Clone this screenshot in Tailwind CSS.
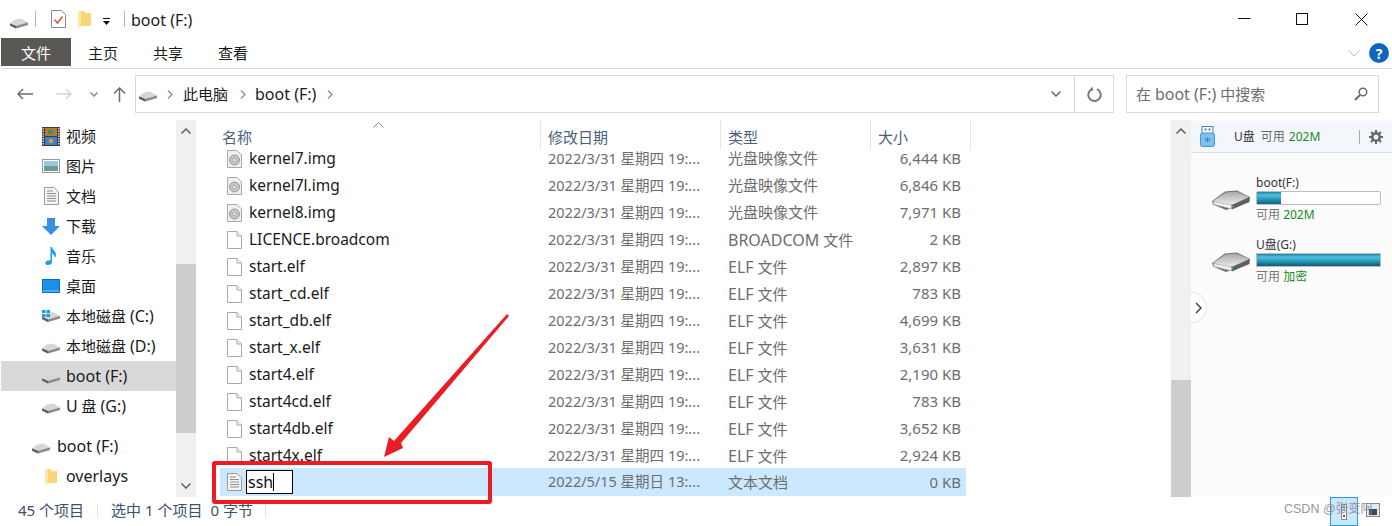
<!DOCTYPE html>
<html lang="zh-CN">
<head>
  <meta charset="UTF-8">
  <title>boot (F:)</title>
  <script src="https://cdn.jsdelivr.net/npm/@tailwindcss/browser@4"></script>
</head>
<body class="bg-white">
  <svg width="0" height="0" class="absolute">
    <defs>
      <symbol id="drive" viewBox="0 0 18 12">
        <path d="M0 6.5 5 2.5 11 1.5 18 5.5 18 8 6 11 0 8.500Z" fill="#d6d6d6"/>
        <path d="M0 6.500 6 9 18 5.500 18 8 6 11.500 0 8.500Z" fill="#8a8a8a"/>
        <path d="M6 9 6 11.500 0 8.500 0 6.500Z" fill="#5e5e5e"/>
        <rect x="6.500" y="9.300" width="1.500" height="1.500" fill="#38b24a"/>
      </symbol>
      <symbol id="folder" viewBox="0 0 13 18">
        <path d="M0 1h6l1 2h6v13H3l-3 1.500Z" fill="#f7d673"/>
        <path d="M0 1h3v16.500H0Z" fill="#fbe9b0"/>
      </symbol>
      <symbol id="file" viewBox="0 0 15 18">
        <path d="M.5.500h9.500l4.500 4.500v12.500H.5Z" fill="#fff" stroke="#a9a9a9"/>
        <path d="M10 .5v4.500h4.500" fill="#f0f0f0" stroke="#a9a9a9"/>
      </symbol>
      <symbol id="disc" viewBox="0 0 15 18">
        <path d="M.5.500h9.500l4.500 4.500v12.500H.5Z" fill="#f0f0f0" stroke="#a9a9a9"/>
        <circle cx="7.500" cy="10" r="5" fill="#c4c4c4" stroke="#9a9a9a"/>
        <circle cx="7.500" cy="10" r="1.500" fill="#fff" stroke="#8a8a8a" stroke-width=".6"/>
      </symbol>
      <symbol id="textfile" viewBox="0 0 15 18">
        <path d="M.5.500h9.500l4.500 4.500v12.500H.5Z" fill="#f4f4f4" stroke="#9a9a9a"/>
        <path d="M3 4h6M3 6.500h9M3 9h9M3 11.500h9M3 14h9" stroke="#8c8c8c"/>
      </symbol>
      <linearGradient id="topface" x1="0" y1="0" x2="0" y2="1">
        <stop offset="0" stop-color="#a8a8a8"/><stop offset="1" stop-color="#ececec"/>
      </linearGradient>
      <symbol id="bigdrive" viewBox="0 0 38 20">
        <path d="M0 11 13 1.500 25 .5 38 7 37.500 12 14 20 1 14.500Z" fill="#6f6f6f"/>
        <path d="M1 11 13.500 2.500 24.500 1.500 37 7 21 14.500 14 15Z" fill="url(#topface)"/>
        <path d="M1 11.500 20 15 20 19 2 14.500Z" fill="#f1f1f1" stroke="#9a9a9a" stroke-width=".5"/>
        <path d="M20 15 37 8 37 12 20 19.500Z" fill="#5e5e5e"/>
        <rect x="19.500" y="15" width="2" height="4" fill="#3da035"/>
      </symbol>
    </defs>
  </svg>

  <div class="relative w-[1392px] h-[526px] overflow-hidden flex flex-col bg-white text-[#1a1a1a] text-[15px] font-['Noto_Sans','Noto_Sans_CJK_SC',sans-serif]">

    <!-- title bar -->
    <div class="h-[38px] flex items-center shrink-0">
      <svg class="w-[18px] h-[12px] ml-[10px] mt-[8px]"><use href="#drive"/></svg>
      <div class="w-px h-[16px] bg-[#b5b5b5] ml-[7px]"></div>
      <svg class="w-[15px] h-[18px] ml-[15px]" viewBox="0 0 15 18">
        <path d="M.5.500h10l4 4v13H.5Z" fill="#fff" stroke="#8a8a8a"/>
        <path d="M3.500 9.500 6.500 13 11.500 6.500" fill="none" stroke="#e8532b" stroke-width="1.500"/>
      </svg>
      <svg class="w-[13px] h-[18px] ml-[12px]"><use href="#folder"/></svg>
      <svg class="w-[7px] h-[7px] ml-[12px] mt-[4px]" viewBox="0 0 7 7"><path d="M0 0h7v1H0ZM0 3h7L3.500 7Z" fill="#111"/></svg>
      <div class="w-px h-[16px] bg-[#b5b5b5] ml-[14px]"></div>
      <span class="ml-[6px] pt-[2px] text-[16px]">boot (F:)</span>
      <div class="ml-auto flex items-center">
        <svg class="w-[13px] h-[13px] mr-[45px]" viewBox="0 0 13 13"><path d="M0 5.500h12.500" stroke="#111"/></svg>
        <svg class="w-[12px] h-[12px] mr-[47px]" viewBox="0 0 12 12"><rect x=".5" y=".5" width="11" height="11" fill="none" stroke="#111"/></svg>
        <svg class="w-[13px] h-[13px] mr-[24px]" viewBox="0 0 13 13"><path d="M.5.500l12 12M12.500.5l-12 12" stroke="#111"/></svg>
      </div>
    </div>

    <!-- ribbon tabs -->
    <div class="h-[31px] shrink-0 flex items-start border-b border-[#d9d9d9] ml-px">
      <div class="w-[70px] h-[28px] bg-[#5a5855] text-white flex items-center justify-center pt-[3px]">文件</div>
      <div class="h-[28px] flex items-center ml-[17px] pt-[3px]">主页</div>
      <div class="h-[28px] flex items-center ml-[35px] pt-[3px]">共享</div>
      <div class="h-[28px] flex items-center ml-[35px] pt-[3px]">查看</div>
      <div class="ml-auto h-[28px] flex items-center gap-[9px] pr-[3px] mt-[1px]">
        <svg class="w-[12px] h-[7px]" viewBox="0 0 12 7"><path d="M.5.500 6 6l5.500-5.500" fill="none" stroke="#b9b9b9"/></svg>
        <div class="w-[20px] h-[20px] rounded-full bg-[#0f66bd] text-white text-[14px] font-bold flex items-center justify-center">?</div>
      </div>
    </div>

    <!-- address row -->
    <div class="h-[38px] mt-[6px] shrink-0 flex items-center">
      <div class="w-[135px] flex items-center shrink-0">
        <svg class="w-[16px] h-[12px] ml-[17px]" viewBox="0 0 16 12"><path d="M6 1 1 6l5 5M1 6h15" fill="none" stroke="#6b6b6b" stroke-width="1.500"/></svg>
        <svg class="w-[16px] h-[12px] ml-[23px]" viewBox="0 0 16 12"><path d="M10 1l5 5-5 5M15 6H0" fill="none" stroke="#d5d5d5" stroke-width="1.500"/></svg>
        <svg class="w-[8px] h-[5px] ml-[18px]" viewBox="0 0 8 5"><path d="M.5.500 4 4 7.500.5" fill="none" stroke="#8a8a8a" stroke-width="1.500"/></svg>
        <svg class="w-[13px] h-[15px] ml-[15px]" viewBox="0 0 13 15"><path d="M1 6.500 6.500 1 12 6.500M6.500 1v14" fill="none" stroke="#6b6b6b" stroke-width="1.500"/></svg>
      </div>
      <div class="w-[979px] h-full border border-[#d9d9d9] flex items-center shrink-0">
        <svg class="w-[18px] h-[12px] ml-[3px] mt-[4px]"><use href="#drive"/></svg>
        <svg class="w-[6px] h-[9px] ml-[10px]" viewBox="0 0 6 9"><path d="M1 .5l4 4-4 4" fill="none" stroke="#8a8a8a" stroke-width="1.200"/></svg>
        <span class="ml-[10px]">此电脑</span>
        <svg class="w-[6px] h-[9px] ml-[12px]" viewBox="0 0 6 9"><path d="M1 .5l4 4-4 4" fill="none" stroke="#8a8a8a" stroke-width="1.200"/></svg>
        <span class="ml-[9px] text-[16px]">boot (F:)</span>
        <svg class="w-[6px] h-[9px] ml-[11px]" viewBox="0 0 6 9"><path d="M1 .5l4 4-4 4" fill="none" stroke="#8a8a8a" stroke-width="1.200"/></svg>
        <svg class="w-[10px] h-[6px] ml-auto mr-[13px]" viewBox="0 0 10 6"><path d="M.5.500 5 5 9.500.5" fill="none" stroke="#6b6b6b" stroke-width="1.500"/></svg>
        <div class="w-[39px] h-full border-l border-[#d9d9d9] flex items-center justify-center">
          <svg class="w-[15px] h-[15px]" viewBox="0 0 15 15"><path d="M5 2.200A6.200 6.200 0 1 0 10 2.200M4.500 .5 5.200 2.600 3 3.500" fill="none" stroke="#7a7a7a" stroke-width="2"/></svg>
        </div>
      </div>
      <div class="w-[253px] h-full ml-[12px] border border-[#d9d9d9] flex items-center pl-[9px] text-[#6d6d6d] shrink-0">
        <span>在 <span class="text-[16px]">boot (F:)</span> 中搜索</span>
        <svg class="w-[14px] h-[14px] ml-auto mr-[10px]" viewBox="0 0 14 14"><circle cx="9" cy="5" r="3.800" fill="none" stroke="#6b6b6b" stroke-width="1.500"/><path d="M6 8 1 13" stroke="#6b6b6b" stroke-width="2"/></svg>
      </div>
    </div>

    <!-- body -->
    <div class="flex h-[377px] mt-[7px] shrink-0">
      <!-- nav tree -->
      <div class="w-[176px] shrink-0 overflow-hidden">
        <ul id="nav" class="pl-px mt-px"></ul>
      </div>
      <div class="w-[20px] shrink-0 bg-[#f0f0f0] flex flex-col mr-[24px]">
        <div class="h-[22px] flex items-center justify-center"><svg class="w-[10px] h-[6px]" viewBox="0 0 10 6"><path d="M.5 5.500 5 1l4.500 4.500" fill="none" stroke="#606060" stroke-width="1.500"/></svg></div>
        <div class="h-[169px] mt-[122px] bg-[#cdcdcd]"></div>
        <div class="mt-auto h-[22px] flex items-center justify-center"><svg class="w-[10px] h-[6px]" viewBox="0 0 10 6"><path d="M.5.500 5 5 9.500.5" fill="none" stroke="#606060" stroke-width="1.500"/></svg></div>
      </div>

      <!-- file list -->
      <div class="w-[951px] shrink-0 flex flex-col overflow-hidden">
        <div class="h-[30px] shrink-0 relative flex text-[#4c607a] pl-[2px]">
          <div class="w-[319px] pt-[6px] h-full border-r border-[#e5e5e5]">名称</div>
          <div class="w-[180px] pl-[7px] pt-[6px] border-r border-[#e5e5e5]">修改日期</div>
          <div class="w-[150px] pl-[7px] pt-[6px] border-r border-[#e5e5e5]">类型</div>
          <div class="w-[100px] pl-[7px] pt-[6px] border-r border-[#e5e5e5]">大小</div>
          <svg class="absolute left-[153px] top-[2px] w-[11px] h-[6px]" viewBox="0 0 11 6"><path d="M.5 5.500 5.500.5l5 5" fill="none" stroke="#8a8a8a"/></svg>
        </div>
        <div class="flex-1 overflow-hidden">
          <ul id="rows" class="-mt-[5px]"></ul>
        </div>
      </div>

      <!-- right scrollbar -->
      <div class="w-[20px] shrink-0 bg-[#f0f0f0] flex flex-col">
        <div class="h-[22px] flex items-center justify-center"><svg class="w-[10px] h-[6px]" viewBox="0 0 10 6"><path d="M.5 5.500 5 1l4.500 4.500" fill="none" stroke="#606060" stroke-width="1.500"/></svg></div>
        <div class="mt-auto h-[117px] bg-[#cdcdcd]"></div>
      </div>

      <!-- disk panel -->
      <div class="flex-1 bg-[#fcfcfc] relative text-[12px] leading-[16px]">
        <div class="h-[32px] mt-px bg-[#f3f6fb] border-b border-[#d8dfe8] flex items-center">
          <svg class="w-[15px] h-[21px] ml-[9px]" viewBox="0 0 15 21">
            <rect x="2" y=".5" width="11" height="7" fill="#fff" stroke="#4a7fb5"/>
            <rect x="4.500" y="2.500" width="2" height="2" fill="#4a7fb5"/><rect x="8.500" y="2.500" width="2" height="2" fill="#4a7fb5"/>
            <rect x=".5" y="7" width="14" height="13.500" rx="2" fill="#7cc0ee" stroke="#4f94cf"/>
            <path d="M7.500 11v5M5.500 12v2l2 1 2-1v-2" fill="none" stroke="#2a74b0" stroke-width=".8"/>
          </svg>
          <span class="ml-[19px] text-[#333]">U盘</span>
          <span class="ml-[6px] text-[#666]">可用</span>
          <span class="ml-[4px] text-[#1a8a1a]">202M</span>
          <div class="w-px h-[14px] bg-[#aaa] ml-[39px]"></div>
          <svg class="w-[14px] h-[14px] ml-[9px]" viewBox="0 0 14 14"><circle cx="7" cy="7" r="3.800" fill="none" stroke="#666" stroke-width="2.600"/><path d="M7 0v3M7 11v3M0 7h3M11 7h3M2 2l2 2M10 10l2 2M2 12l2-2M10 4l2-2" stroke="#666" stroke-width="2"/></svg>
        </div>
        <div class="flex mt-[22px] pl-[21px]">
          <svg class="w-[38px] h-[20px] mt-[15px]"><use href="#bigdrive"/></svg>
          <div class="ml-[6px] w-[125px]">
            <div class="text-[#333]">boot(F:)</div>
            <div class="h-[14px] border border-[#bdbdbd] rounded-[2px] bg-white">
              <div class="w-[24px] h-full bg-[linear-gradient(180deg,#1f7f9f_0%,#4cc3df_25%,#2f9fbd_55%,#0d5f7f_100%)]"></div>
            </div>
            <div class="mt-[2px] text-[#777]">可用 <span class="text-[#1a8a1a]">202M</span></div>
          </div>
        </div>
        <div class="flex mt-[14px] pl-[21px]">
          <svg class="w-[38px] h-[20px] mt-[15px]"><use href="#bigdrive"/></svg>
          <div class="ml-[6px] w-[125px]">
            <div class="text-[#333]">U盘(G:)</div>
            <div class="h-[14px] border border-[#bdbdbd] bg-[linear-gradient(180deg,#1f7f9f_0%,#4cc3df_25%,#2f9fbd_55%,#0b5a78_100%)]"></div>
            <div class="mt-[2px] text-[#777]">可用 <span class="text-[#1a8a1a]">加密</span></div>
          </div>
        </div>
        <div class="absolute left-0 top-[172px] w-[16px] h-[31px] bg-white border border-l-0 border-[#dde3ee] rounded-r-full flex items-center justify-center">
          <svg class="w-[7px] h-[12px]" viewBox="0 0 7 12"><path d="M1 1l5 5-5 5" fill="none" stroke="#444" stroke-width="1.500"/></svg>
        </div>
      </div>
    </div>

    <!-- status bar -->
    <div class="flex-1 flex items-center relative text-[#3a506b] pl-[18px] pb-[2px]">
      <span>45 个项目</span>
      <div class="w-px h-[14px] bg-[#e5e5e5] ml-[13px]"></div>
      <span class="ml-[13px]">选中 1 个项目</span>
      <span class="ml-[8px]">0 字节</span>
      <div class="w-px h-[14px] bg-[#e5e5e5] ml-[12px]"></div>
      <div class="absolute left-[1330px] top-0 w-[28px] h-full border border-[#26a0da] bg-[#cce8ff] flex items-center justify-center">
        <svg class="w-[6px] h-[16px]" viewBox="0 0 6 16"><rect x=".5" y=".5" width="5" height="15" fill="#fff" stroke="#888"/><rect x="2" y="11" width="2" height="2" fill="#d22"/><path d="M2 3h2M2 6h2" stroke="#333"/></svg>
      </div>
      <svg class="absolute left-[1366px] top-[6px] w-[14px] h-[14px]" viewBox="0 0 14 14"><rect x=".5" y=".5" width="13" height="13" fill="#dfe9f7" stroke="#888"/><rect x="3" y="6" width="8" height="6" fill="#3b4a55"/></svg>
      <span class="absolute left-[1284px] top-[3px] text-[12.500px] text-[#8a8a8a]/90 font-['Liberation_Sans','Noto_Sans_CJK_SC',sans-serif]">CSDN @张变阿</span>
    </div>

    <!-- red annotations drawn over the screenshot -->
    <div class="absolute left-[212px] top-[461px] w-[280px] h-[43px] border-[4px] border-[#ed1c24] rounded-[3px]"></div>
    <svg class="absolute left-0 top-0 w-[1392px] h-[526px] pointer-events-none" viewBox="0 0 1392 526">
      <path d="M507 314 509 316 401 443 403 448 384 457 389 437 394 441Z" fill="#ed1c24"/>
    </svg>
  </div>

  <script>
    const icons = {
      video: '<svg class="w-[18px] h-[19px]" viewBox="0 0 18 19"><rect width="18" height="19" fill="#3c3c3c"/><rect x="3" y="1" width="12" height="8" fill="#b5793f"/><rect x="6" y="3" width="5" height="4" fill="#4b8f4f"/><rect x="3" y="10" width="12" height="8" fill="#3d7fd0"/><rect x="7" y="12" width="4" height="4" fill="#c9a03f"/><path d="M1.200 1v17M16.800 1v17" stroke="#ddd" stroke-width="1.400" stroke-dasharray="1.500 1"/></svg>',
      pic: '<svg class="w-[18px] h-[14px]" viewBox="0 0 18 14"><rect x=".5" y=".5" width="17" height="13" fill="#fff" stroke="#9a9a9a"/><rect x="2" y="2" width="14" height="5" fill="#9cc6e6"/><rect x="2" y="7" width="14" height="5" fill="#6f9c8f"/></svg>',
      doc: '<svg class="w-[15px] h-[18px]"><use href="#textfile"/></svg>',
      down: '<svg class="w-[18px] h-[17px]" viewBox="0 0 18 17"><path d="M5 0h8v8h5l-9 9-9-9h5Z" fill="#3a8ee0"/></svg>',
      music: '<svg class="w-[12px] h-[18px]" viewBox="0 0 12 18"><path d="M5.500 0h1.500c.5 3 4 4 4 8 0 1-.5 2-1 3 0-2-1.500-4-3-4.500V15c0 2-2 3-4 3s-3-1-2.500-2.500 2.500-2.500 5-2Z" fill="#1e9df2"/></svg>',
      desk: '<svg class="w-[18px] h-[14px]" viewBox="0 0 18 14"><rect x=".5" y=".5" width="17" height="13" fill="#1a90e8" stroke="#0a6dbf"/><path d="M1 12h16" stroke="#7fc8f6"/></svg>',
      win: '<svg class="w-[18px] h-[13px]" viewBox="0 0 18 13"><use href="#drive"/><path d="M0 0h3.500v3H0ZM4.500 0H8v3H4.500ZM0 4h3.500v3H0ZM4.500 4H8v3H4.500Z" fill="#19a1e6"/></svg>',
      drive: '<svg class="w-[18px] h-[12px] mt-[4px]"><use href="#drive"/></svg>',
      folder: '<svg class="w-[12px] h-[17px]"><use href="#folder"/></svg>'
    };
    // latin runs in the original are wider than Noto Sans next to the CJK size
    const L = s => `<span class="text-[16px]">${s}</span>`;

    const nav = [
      { i: 'video', t: '视频' },
      { i: 'pic', t: '图片' },
      { i: 'doc', t: '文档' },
      { i: 'down', t: '下载' },
      { i: 'music', t: '音乐' },
      { i: 'desk', t: '桌面' },
      { i: 'win', t: '本地磁盘 ' + L('(C:)') },
      { i: 'drive', t: '本地磁盘 ' + L('(D:)') },
      { i: 'drive', t: L('boot (F:)'), sel: true },
      { i: 'drive', t: L('U') + ' 盘 ' + L('(G:)') },
      { i: 'drive', t: L('boot (F:)'), out: true },
      { i: 'folder', t: L('overlays') }
    ];
    document.getElementById('nav').innerHTML = nav.map(n => `
      <li class="h-[30px] flex items-center ${n.sel ? 'bg-[#d9d9d9]' : ''} ${n.out ? 'mt-[10px]' : ''}">
        <span class="${n.out ? 'w-[56px] pl-[31px]' : 'w-[65px] pl-[41px]'} shrink-0"><span class="w-[18px] flex justify-center">${icons[n.i]}</span></span>
        <span class="whitespace-nowrap">${n.t}</span>
      </li>`).join('');

    const d = '2022/3/31 星期四 19:...';
    const files = [
      ['disc', 'kernel7.img', d, '光盘映像文件', '6,444 KB'],
      ['disc', 'kernel7l.img', d, '光盘映像文件', '6,846 KB'],
      ['disc', 'kernel8.img', d, '光盘映像文件', '7,971 KB'],
      ['file', 'LICENCE.broadcom', d, L('BROADCOM') + ' 文件', '2 KB'],
      ['file', 'start.elf', d, L('ELF') + ' 文件', '2,897 KB'],
      ['file', 'start_cd.elf', d, L('ELF') + ' 文件', '783 KB'],
      ['file', 'start_db.elf', d, L('ELF') + ' 文件', '4,699 KB'],
      ['file', 'start_x.elf', d, L('ELF') + ' 文件', '3,631 KB'],
      ['file', 'start4.elf', d, L('ELF') + ' 文件', '2,190 KB'],
      ['file', 'start4cd.elf', d, L('ELF') + ' 文件', '783 KB'],
      ['file', 'start4db.elf', d, L('ELF') + ' 文件', '3,652 KB'],
      ['file', 'start4x.elf', d, L('ELF') + ' 文件', '2,924 KB']
    ];
    const row = f => `
      <li class="h-[27px] flex items-center w-[747px] -ml-px text-[#6d6d6d]">
        <svg class="w-[15px] h-[18px] ml-[8px] shrink-0"><use href="#${f[0]}"/></svg>
        <span class="ml-[7px] w-[299px] text-[#1a1a1a] text-[15.500px] whitespace-nowrap">${f[1]}</span>
        <span class="w-[180px] text-[14.500px] whitespace-nowrap">${f[2]}</span>
        <span class="w-[140px] whitespace-nowrap">${f[3]}</span>
        <span class="w-[93px] text-right whitespace-nowrap">${f[4]}</span>
      </li>`;
    document.getElementById('rows').innerHTML = files.map(row).join('') + `
      <li class="h-[28px] -mt-px -ml-px flex items-center w-[747px] bg-[#cce8ff] text-[#6d6d6d]">
        <svg class="w-[15px] h-[18px] ml-[8px] shrink-0"><use href="#textfile"/></svg>
        <span class="ml-[4px] w-[47px] h-[24px] border border-black bg-white flex items-center pl-[1px] text-[#111] text-[16px] shrink-0"><span>ssh</span><span class="w-px h-[18px] bg-black"></span></span>
        <span class="ml-[255px] w-[180px] text-[14.500px] whitespace-nowrap">2022/5/15 星期日 13:...</span>
        <span class="w-[140px] whitespace-nowrap">文本文档</span>
        <span class="w-[93px] text-right whitespace-nowrap">0 KB</span>
      </li>`;
  </script>
</body>
</html>
